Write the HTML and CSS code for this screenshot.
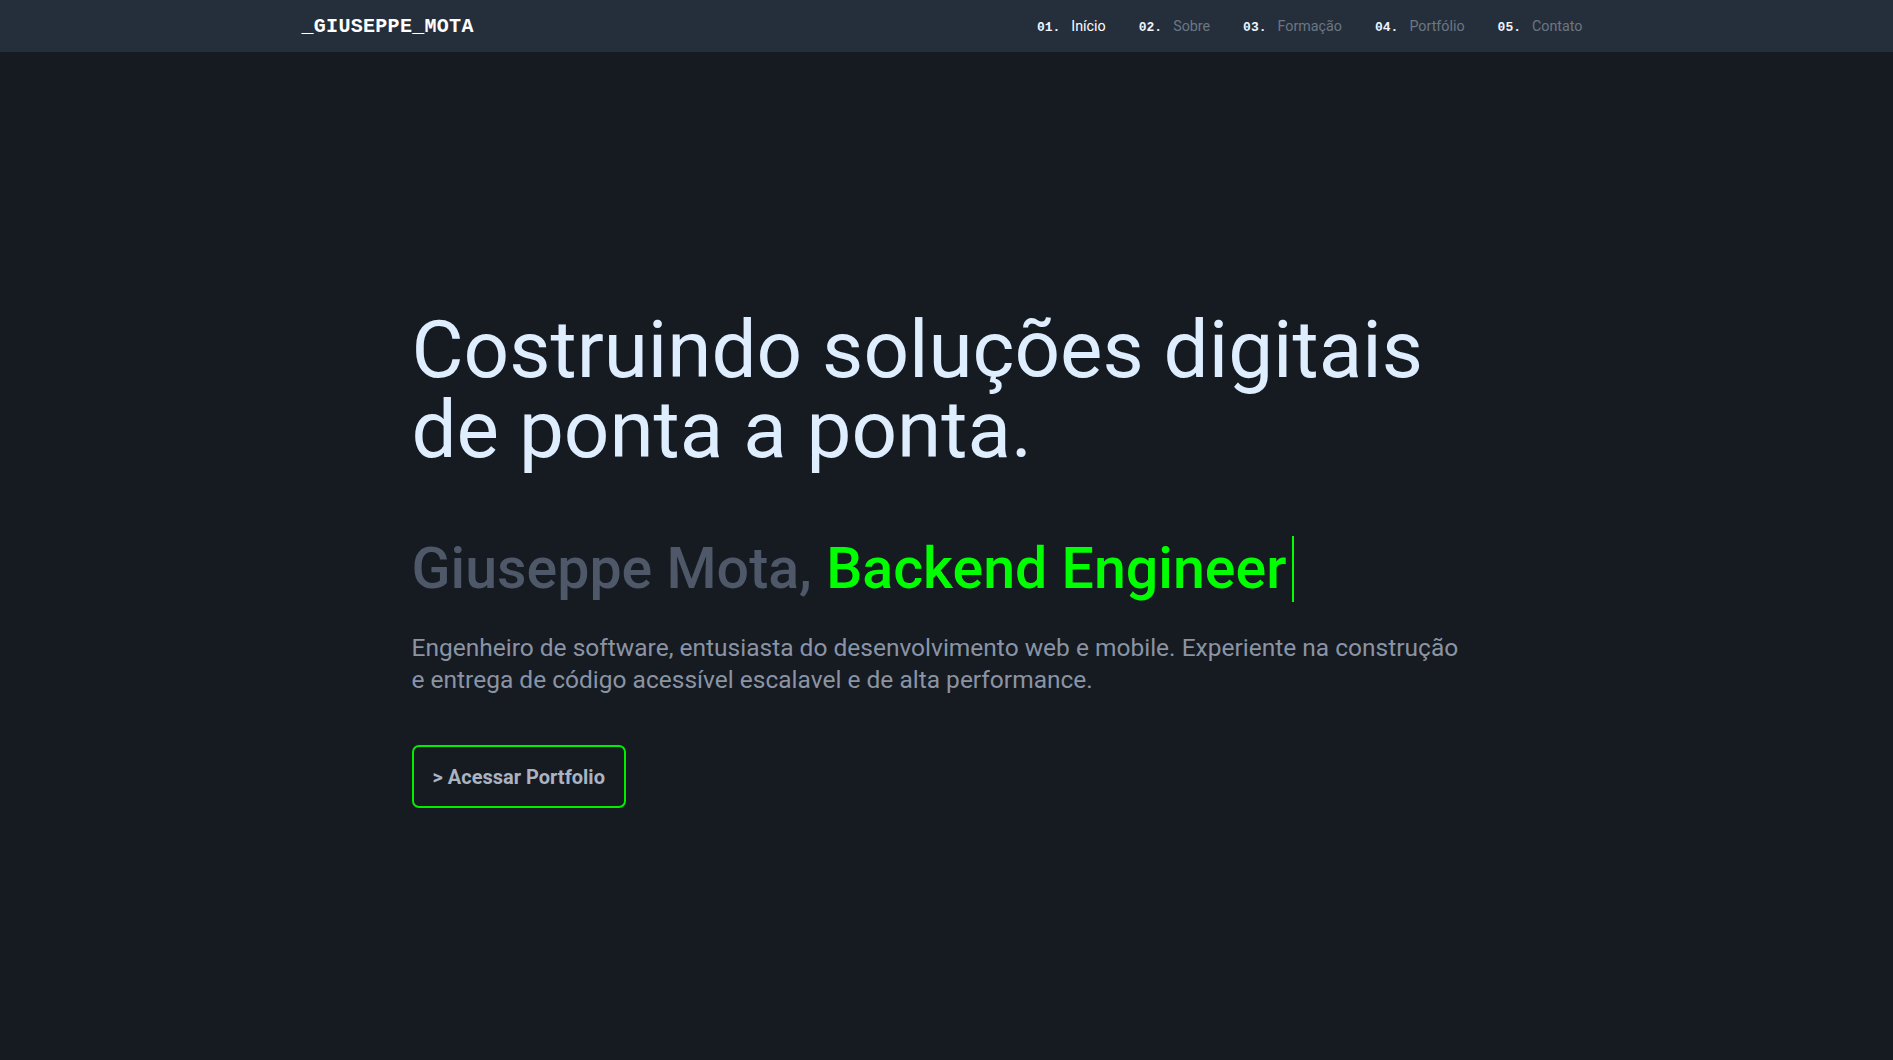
FILE: index.html
```html
<!DOCTYPE html>
<html lang="pt-BR">
<head>
<meta charset="utf-8">
<title>Giuseppe Mota</title>
<link rel="stylesheet" href="styles.css">
</head>
<body>
<header class="topbar">
  <div class="topbar-inner">
    <a class="logo" href="#">_GIUSEPPE_MOTA</a>
    <nav class="nav">
      <a class="nav-item active" href="#"><span class="num">01.</span>Início</a>
      <a class="nav-item" href="#"><span class="num">02.</span>Sobre</a>
      <a class="nav-item" href="#"><span class="num">03.</span>Formação</a>
      <a class="nav-item" href="#"><span class="num">04.</span>Portfólio</a>
      <a class="nav-item" href="#"><span class="num">05.</span>Contato</a>
    </nav>
  </div>
</header>
<main class="hero">
  <div class="hero-inner">
    <h1 class="title">Costruindo soluções digitais<br>de ponta a ponta.</h1>
    <h2 class="subtitle">Giuseppe Mota, <span class="role">Backend Engineer</span><span class="cursor"></span></h2>
    <p class="lead">Engenheiro de software, entusiasta do desenvolvimento web e mobile. Experiente na construção e entrega de código acessível escalavel e de alta performance.</p>
    <a class="cta" href="#">&gt; Acessar Portfolio</a>
  </div>
</main>
</body>
</html>
```
FILE: styles.css
```css
* { box-sizing: border-box; }
html, body { margin: 0; padding: 0; }
body {
  background: #161a21;
  font-family: Roboto, "Noto Sans", sans-serif;
  color: #dfeeff;
  min-height: 100vh;
}
a { text-decoration: none; }

.topbar {
  background: #252f3b;
  height: 52px;
}
.topbar-inner {
  width: 1290px;
  margin: 0 auto;
  height: 100%;
  display: flex;
  align-items: center;
  justify-content: space-between;
  padding-right: 9px;
}
.logo {
  font-family: "Liberation Mono", "Courier New", monospace;
  font-weight: 700;
  font-size: 20px;
  color: #ffffff;
  letter-spacing: 0.3px;
}
.nav {
  display: flex;
  gap: 33px;
  align-items: center;
}
.nav-item {
  font-size: 14.3px;
  color: #6c7683;
  display: flex;
  align-items: baseline;
}
.nav-item.active { color: #ffffff; }
.num {
  font-family: "Liberation Mono", "Courier New", monospace;
  font-weight: 700;
  font-size: 13px;
  color: #eef5ff;
  margin-right: 11px;
}

.hero-inner {
  width: 1070px;
  margin: 0 auto;
  padding-top: 258px;
}
.title {
  margin: 0;
  font-size: 80px;
  font-weight: 400;
  line-height: 80px;
  color: #dfeeff;
}
.subtitle {
  margin: 66px 0 0;
  font-size: 57.3px;
  font-weight: 500;
  line-height: 66px;
  color: #4e5869;
  display: flex;
  align-items: center;
  white-space: pre;
}
.role { color: #00ff00; }
.cursor {
  display: inline-block;
  width: 2px;
  height: 66px;
  background: #00ff00;
  margin-left: 6px;
}
.lead {
  margin: 30px 0 0;
  max-width: 1058px;
  font-size: 24.5px;
  line-height: 31.5px;
  color: #8a94a4;
}
.cta {
  display: inline-flex;
  align-items: center;
  margin-top: 50px;
  height: 63px;
  padding: 0 19px;
  border: 2px solid #00ee00;
  border-radius: 7px;
  font-size: 20px;
  font-weight: 700;
  color: #a9b3c1;
}
```
